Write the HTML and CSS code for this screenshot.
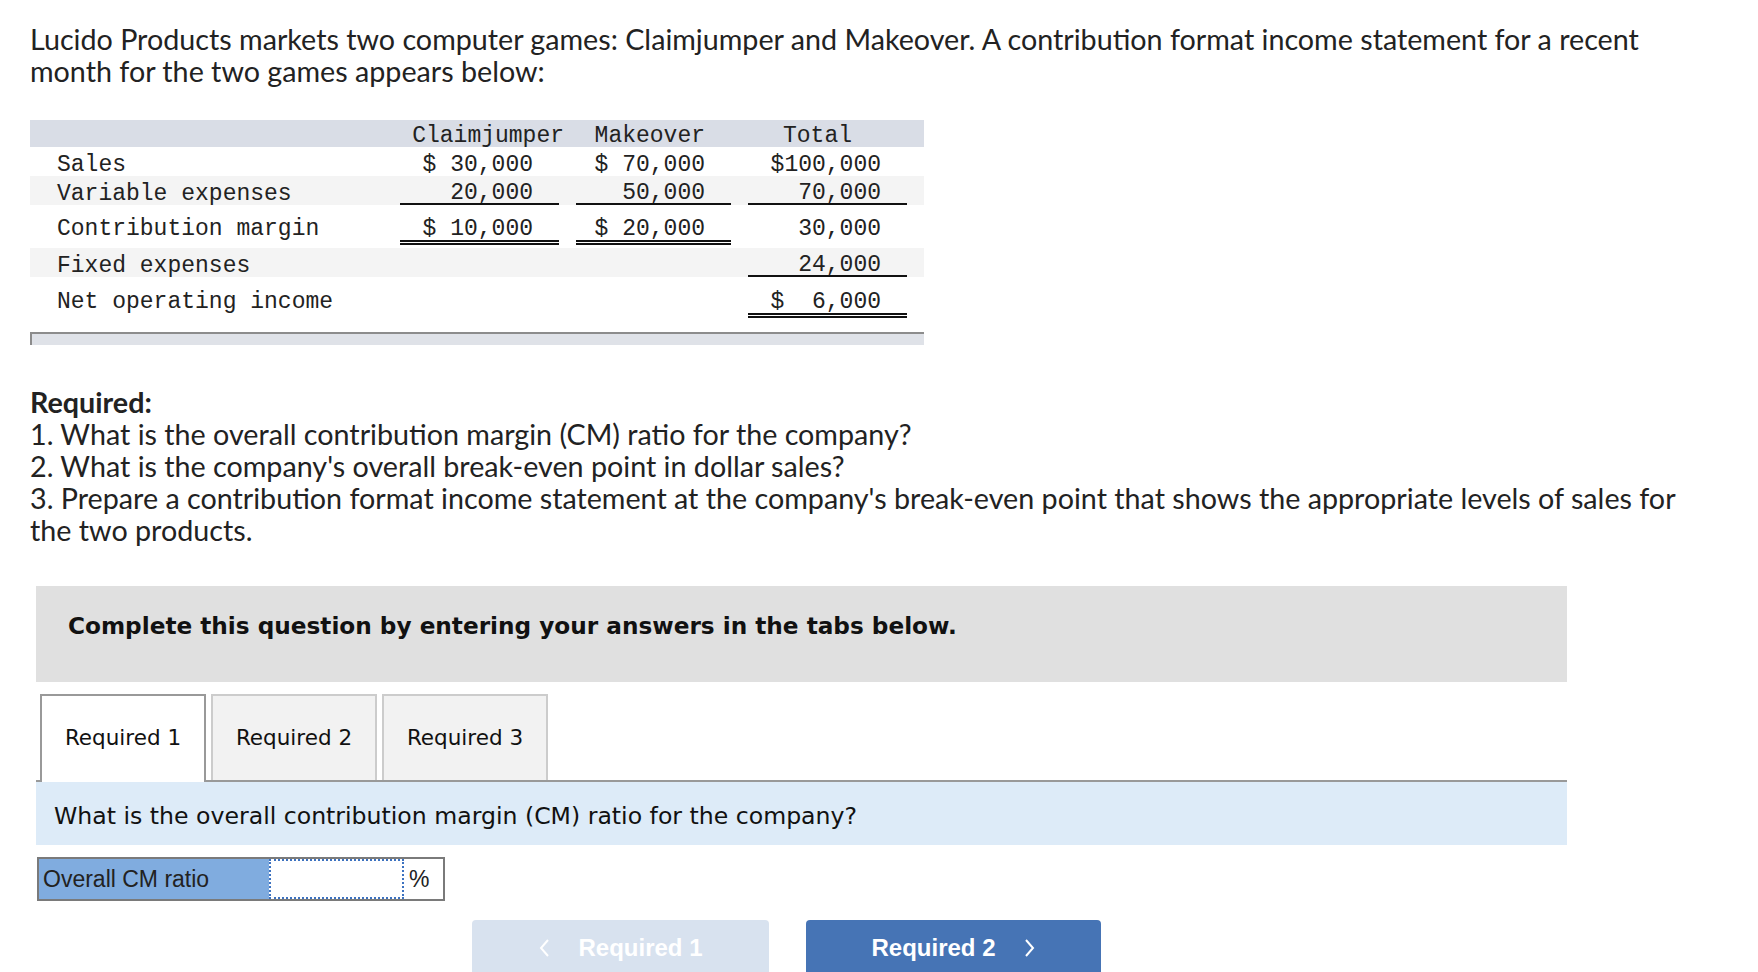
FILE: index.html
```html
<!DOCTYPE html>
<html lang="en">
<head>
<meta charset="utf-8">
<title>Lucido Products</title>
<link rel="stylesheet" href="styles.css">
</head>
<body>
<div class="page">
  <p class="intro">Lucido Products markets two computer games: Claimjumper and Makeover. A contribution format income statement for a recent<br>month for the two games appears below:</p>

  <div class="stmt">
    <div class="row head">
      <div></div>
      <div class="h h1">Claimjumper</div>
      <div class="h h2">Makeover</div>
      <div class="h h3">Total</div>
    </div>
    <div class="row">
      <div class="label">Sales</div>
      <div class="num">$ 30,000</div>
      <div class="num">$ 70,000</div>
      <div class="num">$100,000</div>
    </div>
    <div class="row shade">
      <div class="label">Variable expenses</div>
      <div class="num line">20,000</div>
      <div class="num line">50,000</div>
      <div class="num line">70,000</div>
    </div>
    <div class="row tall">
      <div class="label">Contribution margin</div>
      <div class="num dbl">$ 10,000</div>
      <div class="num dbl">$ 20,000</div>
      <div class="num">30,000</div>
    </div>
    <div class="row shade">
      <div class="label">Fixed expenses</div>
      <div></div>
      <div></div>
      <div class="num line">24,000</div>
    </div>
    <div class="row tall2">
      <div class="label">Net operating income</div>
      <div></div>
      <div></div>
      <div class="num dbl">$&nbsp;&nbsp;6,000</div>
    </div>
    <div class="stmt-foot"></div>
  </div>

  <div class="required">
    <strong>Required:</strong><br>
    1. What is the overall contribution margin (CM) ratio for the company?<br>
    2. What is the company's overall break-even point in dollar sales?<br>
    3. Prepare a contribution format income statement at the company's break-even point that shows the appropriate levels of sales for<br>the two products.
  </div>

  <div class="widget">
    <div class="instr">Complete this question by entering your answers in the tabs below.</div>

    <div class="tabs">
      <div class="tab active">Required 1</div>
      <div class="tab">Required 2</div>
      <div class="tab">Required 3</div>
    </div>

    <div class="question">What is the overall contribution margin (CM) ratio for the company?</div>

    <div class="answer">
      <div class="answer-label">Overall CM ratio</div>
      <div class="answer-input"></div>
      <div class="answer-unit">%</div>
    </div>

    <div class="nav">
      <div class="btn btn-prev">
        <svg class="chev" width="12" height="20" viewBox="0 0 12 20"><polyline points="10,2 3,10 10,18" fill="none" stroke="#fff" stroke-width="2"/></svg>
        <span>Required 1</span>
      </div>
      <div class="btn btn-next">
        <span>Required 2</span>
        <svg class="chev" width="12" height="20" viewBox="0 0 12 20"><polyline points="2,2 9,10 2,18" fill="none" stroke="#fff" stroke-width="2"/></svg>
      </div>
    </div>
  </div>
</div>
</body>
</html>
```
FILE: styles.css
```css
html, body { margin: 0; padding: 0; overflow: hidden; }
body { font-family: "Lato", "Liberation Sans", sans-serif; color: #222; background: #fff; }

.page { padding: 23px 30px 0; }

.intro { margin: 0; font-size: 28.7px; line-height: 32px; }

.stmt { margin-top: 33px; width: 894px; font-family: "Liberation Mono", monospace; font-size: 23px; color: #222; }
.row { display: grid; grid-template-columns: 353px 159px 155px 159px; column-gap: 17px; padding-right: 17px; }
.row > div { padding-top: 7px; line-height: 22px; white-space: pre; }
.row.head > div { padding-top: 6px; line-height: 21px; }
.row.head { background: #d9dde6; }
.row.shade { background: #f4f4f4; }
.row.tall { padding-top: 6px; padding-bottom: 3px; }
.row.tall2 { padding-top: 7px; }
.label { padding-left: 27px; }
.num { text-align: right; padding-right: 26px; }
.row > .num.line { line-height: 20px; border-bottom: 2px solid #111; }
.num.dbl { border-bottom: 5px double #111; }
.h { text-align: right; }
.h1 { margin-right: -5px; }
.h2 { padding-right: 26px; }
.h3 { padding-right: 55px; }
.stmt-foot { margin-top: 14px; height: 11px; background: #dfe2e8; border-top: 2px solid #8c8c8c; border-left: 2px solid #8c8c8c; }

.required { margin-top: 41px; font-size: 28.7px; line-height: 32px; }
.required strong { font-weight: 700; }

.widget { margin: 40px 0 0 6px; width: 1531px; font-family: "DejaVu Sans", Verdana, sans-serif; color: #111; }
.instr { height: 96px; box-sizing: border-box; padding: 28px 32px 0; background: #e0e0e0; font-weight: 700; font-size: 23.2px; line-height: 24px; }

.tabs { display: flex; gap: 5px; margin-top: 12px; padding-left: 4px; border-bottom: 2px solid #999; }
.tab { width: 162px; height: 84px; box-sizing: content-box; border: 2px solid #ccc; border-bottom: 0; background: #f2f2f2; font-size: 21.5px; line-height: 84px; text-align: center; }
.tab.active { background: #fff; border-color: #999; margin-bottom: -2px; padding-bottom: 2px; }

.question { height: 63px; box-sizing: border-box; padding: 21px 18px 0; background: #ddebf8; font-size: 23.6px; line-height: 26px; }

.answer { display: flex; width: 404px; height: 40px; margin: 12px 0 0 1px; border: 2px solid #7a7a7a; font-family: "Liberation Sans", Arial, sans-serif; font-size: 23px; color: #222; }
.answer-label { width: 230px; background: #80acdf; padding-left: 4px; box-sizing: border-box; line-height: 40px; }
.answer-input { width: 135px; box-sizing: border-box; border: 2px dotted #3d72c0; background: #fff; }
.answer-unit { flex: 1; padding-left: 5px; line-height: 40px; }

.nav { display: flex; gap: 37px; margin: 19px 0 0 436px; }
.btn { display: flex; align-items: center; justify-content: center; gap: 28px; height: 52px; box-sizing: border-box; padding-top: 4px; border-radius: 4px 4px 0 0; color: #fff; font-family: "Liberation Sans", Arial, sans-serif; font-weight: 700; font-size: 24px; }
.btn-prev { width: 297px; background: #d8e2ef; }
.btn-next { width: 295px; background: #4674b5; }
.chev { display: block; }
```
